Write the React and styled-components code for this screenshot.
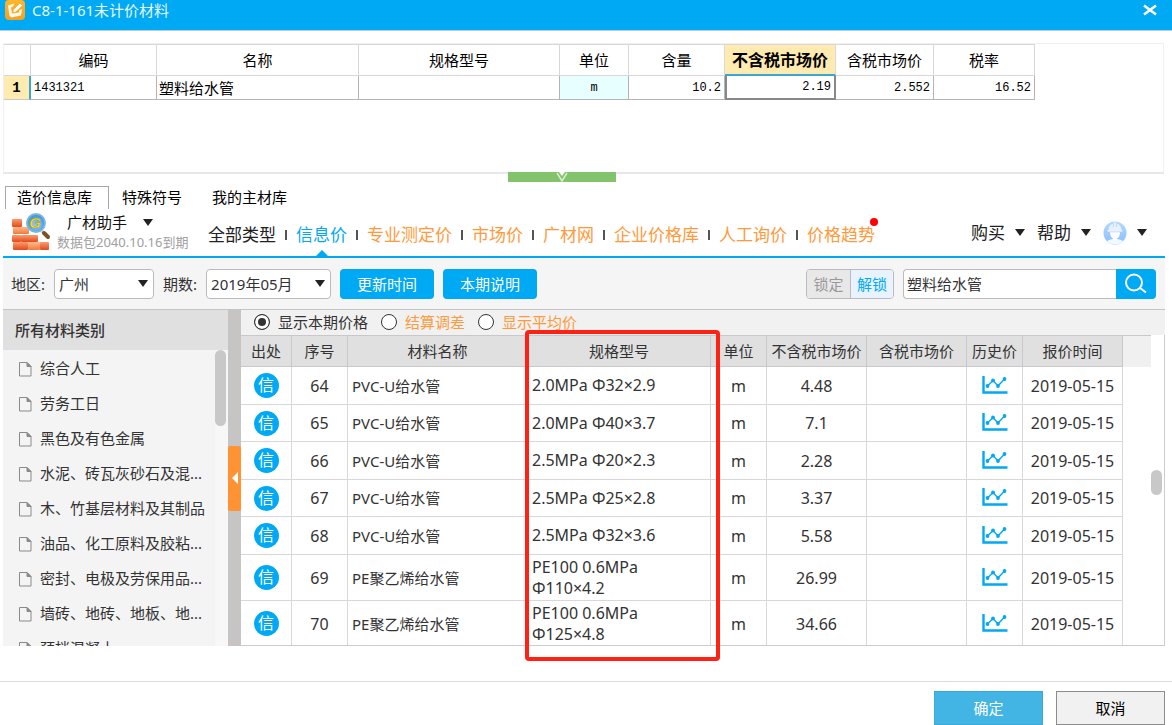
import React, { useState } from 'react'
import styled, { createGlobalStyle, css } from 'styled-components'

const BLUE = '#00a9f3'
const ORANGE = '#ff9a3c'

const navItems = ['全部类型', '信息价', '专业测定价', '市场价', '广材网', '企业价格库', '人工询价', '价格趋势']

const categories = [
  '综合人工',
  '劳务工日',
  '黑色及有色金属',
  '水泥、砖瓦灰砂石及混...',
  '木、竹基层材料及其制品',
  '油品、化工原料及胶粘...',
  '密封、电极及劳保用品...',
  '墙砖、地砖、地板、地...',
  '预拌混凝土'
]

const materials = [
  { id: 64, name: 'PVC-U给水管', spec: ['2.0MPa Φ32×2.9'], price: '4.48' },
  { id: 65, name: 'PVC-U给水管', spec: ['2.0MPa Φ40×3.7'], price: '7.1' },
  { id: 66, name: 'PVC-U给水管', spec: ['2.5MPa Φ20×2.3'], price: '2.28' },
  { id: 67, name: 'PVC-U给水管', spec: ['2.5MPa Φ25×2.8'], price: '3.37' },
  { id: 68, name: 'PVC-U给水管', spec: ['2.5MPa Φ32×3.6'], price: '5.58' },
  { id: 69, name: 'PE聚乙烯给水管', spec: ['PE100 0.6MPa', 'Φ110×4.2'], price: '26.99' },
  { id: 70, name: 'PE聚乙烯给水管', spec: ['PE100 0.6MPa', 'Φ125×4.8'], price: '34.66' }
]

const priceModes = ['显示本期价格', '结算调差', '显示平均价']

const AppIcon = () => (
  <svg width='20' height='20' viewBox='0 0 20 20' aria-hidden='true'>
    <defs>
      <linearGradient id='appIcon' x1='0' y1='0' x2='0' y2='1'>
        <stop offset='0' stopColor='#ffb52e' />
        <stop offset='1' stopColor='#f7a01c' />
      </linearGradient>
    </defs>
    <rect width='20' height='20' rx='4' fill='url(#appIcon)' />
    <path d='M3 5.500L9.500 3.500L8 6.500L6 7.500L7 13.500L14 12.500L14.500 10L17 9L16 15.500L6.500 17.500L4.500 16z' fill='#fff' opacity='.92' />
    <path d='M8.500 9.500l6.500-6.500 2.500 2.500-6.500 6.500-3.300.8z' fill='#fff' stroke='#f9a825' strokeWidth='.8' />
  </svg>
)

const BrandLogo = () => (
  <svg width='40' height='40' viewBox='0 0 40 40' aria-hidden='true'>
    <defs>
      <linearGradient id='brick' x1='0' y1='0' x2='0' y2='1'>
        <stop offset='0' stopColor='#ff9a6b' />
        <stop offset='1' stopColor='#e04a1c' />
      </linearGradient>
      <linearGradient id='brickLight' x1='0' y1='0' x2='0' y2='1'>
        <stop offset='0' stopColor='#ffb98a' />
        <stop offset='1' stopColor='#f07a3c' />
      </linearGradient>
      <radialGradient id='lens' cx='.5' cy='.6' r='.6'>
        <stop offset='0' stopColor='#8fd8ff' />
        <stop offset='1' stopColor='#2b8fd8' />
      </radialGradient>
    </defs>
    <rect x='2' y='8' width='36' height='30' fill='#f6d9cb' opacity='0' />
    <g fill='url(#brick)'>
      <rect x='1' y='7' width='10' height='8' rx='1' />
      <rect x='1' y='23' width='9' height='7' rx='1' />
      <rect x='10' y='23' width='17' height='7' rx='1' />
      <rect x='2' y='30' width='15' height='8' rx='1' />
      <rect x='29' y='30' width='9' height='8' rx='1' />
    </g>
    <g fill='url(#brickLight)'>
      <rect x='2' y='15' width='16' height='7' rx='1' />
      <rect x='17' y='30' width='12' height='8' rx='1' />
    </g>
    <path d='M31 19l2 2' stroke='#c9c9c9' strokeWidth='3' />
    <path d='M33 21l4 4' stroke='#7a5326' strokeWidth='4' strokeLinecap='round' />
    <circle cx='25' cy='11' r='9' fill='url(#lens)' stroke='#7fb4dc' strokeWidth='2' />
    <text x='24' y='16' textAnchor='middle' fill='#ffdc32' stroke='#a8862a' strokeWidth='.5' fontSize='15' fontWeight='700' fontStyle='italic' fontFamily='Liberation Sans, sans-serif'>G</text>
  </svg>
)

const Caret = () => (
  <svg width='10' height='7' viewBox='0 0 10 7' aria-hidden='true'>
    <path d='M0 0h10L5 7z' fill='#222' />
  </svg>
)

const Avatar = () => (
  <svg width='24' height='24' viewBox='0 0 24 24' aria-hidden='true'>
    <defs>
      <linearGradient id='avatarFill' x1='0' y1='0' x2='0' y2='1'>
        <stop offset='0' stopColor='#b5d8ff' />
        <stop offset='1' stopColor='#8abfff' />
      </linearGradient>
      <clipPath id='avatarClip'><circle cx='12' cy='12' r='11.500' /></clipPath>
    </defs>
    <circle cx='12' cy='12' r='11.500' fill='url(#avatarFill)' />
    <g clipPath='url(#avatarClip)'>
      <path d='M5.500 9c0-3.500 2-5.500 4.500-6.500v3.500h.8V1.500h2.400V6h.8V2.500c2.500 1 4.500 3 4.500 6.500z' fill='#e6f2ff' />
      <path d='M4.500 9.200h15v1.300h-15z' fill='#fff' />
      <path d='M7 11.200h10c0 3.500-1.500 5.500-3 6.300v1.500h-4v-1.500c-1.500-.8-3-2.800-3-6.300z' fill='#fff' />
      <path d='M2 24c1-4.500 4.500-5.500 8-6l2 1 2-1c3.500.5 7 1.500 8 6z' fill='#f2f8ff' />
    </g>
  </svg>
)

const DocIcon = () => (
  <svg width='13' height='20' viewBox='0 0 13 20' aria-hidden='true'>
    <path d='M.5 4.500h7.500l4 4V18H.5z' fill='none' stroke='#8a8a8a' />
    <path d='M8 4.500v4h4z' fill='#8a8a8a' stroke='#8a8a8a' />
  </svg>
)

const TrendIcon = () => (
  <svg width='26' height='20' viewBox='0 0 26 20' aria-hidden='true'>
    <path d='M1.500 0v16.500H25.500' fill='none' stroke={BLUE} strokeWidth='2.400' />
    <path d='M5.500 10l5.500-5.500 5 5.500 6.500-7' fill='none' stroke={BLUE} strokeWidth='1.400' />
    <g fill={BLUE}>
      <circle cx='5.500' cy='10' r='1.900' />
      <circle cx='11' cy='4.500' r='1.900' />
      <circle cx='16' cy='10' r='1.900' />
      <circle cx='22.500' cy='3' r='1.900' />
    </g>
  </svg>
)

const SearchIcon = () => (
  <svg width='24' height='22' viewBox='0 0 24 22' fill='none' stroke='#fff' strokeWidth='2' aria-hidden='true'>
    <circle cx='10' cy='9.500' r='8' />
    <path d='M16 15l6 4.500' />
  </svg>
)

export default function App() {
  const [nav, setNav] = useState('信息价')
  const [mode, setMode] = useState(priceModes[0])
  const [keyword, setKeyword] = useState('塑料给水管')

  return (
    <Dialog>
      <GlobalStyle />

      <TitleBar>
        <AppIcon />
        <Title>C8-1-161未计价材料</Title>
        <CloseButton aria-label='关闭'>
          <svg width='14' height='12' viewBox='0 0 14 12' aria-hidden='true'>
            <path d='M1 1.500l12 9M13 1.500l-12 9' stroke='#fff' strokeWidth='2.600' />
          </svg>
        </CloseButton>
      </TitleBar>

      <GridBox>
        <Grid>
          <colgroup>
            {[27, 126, 202, 201, 69, 96, 111, 98, 101].map((w, i) => <Col key={i} $w={w} />)}
          </colgroup>
          <thead>
            <tr>
              <GridHead />
              <GridHead>编码</GridHead>
              <GridHead>名称</GridHead>
              <GridHead>规格型号</GridHead>
              <GridHead>单位</GridHead>
              <GridHead>含量</GridHead>
              <GridHead $active>不含税市场价</GridHead>
              <GridHead>含税市场价</GridHead>
              <GridHead>税率</GridHead>
            </tr>
          </thead>
          <tbody>
            <tr>
              <RowNumber>1</RowNumber>
              <GridCell $mono>1431321</GridCell>
              <GridCell>塑料给水管</GridCell>
              <GridCell />
              <GridCell $mono $align='center' $tint>m</GridCell>
              <GridCell $mono $align='right'>10.2</GridCell>
              <GridCell $mono $align='right' $focus>2.19</GridCell>
              <GridCell $mono $align='right'>2.552</GridCell>
              <GridCell $mono $align='right'>16.52</GridCell>
            </tr>
          </tbody>
        </Grid>
        <CollapseHandle aria-label='收起'>
          <svg width='12' height='10' viewBox='0 0 12 10' aria-hidden='true'>
            <path d='M3 0h6L6 4z' fill='#fff' />
            <path d='M1 1l5 8 5-8' fill='none' stroke='#d8efcf' strokeWidth='1.500' />
          </svg>
        </CollapseHandle>
      </GridBox>

      <Tabs>
        <Tab $active>造价信息库</Tab>
        <Tab>特殊符号</Tab>
        <Tab>我的主材库</Tab>
      </Tabs>

      <Header>
        <Brand>
          <BrandLogo />
          <BrandText>
            <BrandName>广材助手 <Caret /></BrandName>
            <Expiry>数据包2040.10.16到期</Expiry>
          </BrandText>
        </Brand>
        <Nav>
          {navItems.map((item, i) => (
            <NavItem key={item}>
              <NavLink href='#' $plain={i === 0} $active={item === nav} onClick={() => setNav(item)}>
                {item}
                {item === '价格趋势' && <RedDot />}
              </NavLink>
            </NavItem>
          ))}
        </Nav>
        <Account>
          <MenuButton>购买 <Caret /></MenuButton>
          <MenuButton>帮助 <Caret /></MenuButton>
          <MenuButton aria-label='账户'><Avatar /> <Caret /></MenuButton>
        </Account>
      </Header>

      <Filters>
        <FilterLabel htmlFor='region'>地区:</FilterLabel>
        <SelectBox $w={100}>
          <Select id='region' defaultValue='广州'><option>广州</option></Select>
          <Caret />
        </SelectBox>
        <FilterLabel htmlFor='period'>期数:</FilterLabel>
        <SelectBox $w={125}>
          <Select id='period' defaultValue='2019年05月'><option>2019年05月</option></Select>
          <Caret />
        </SelectBox>
        <BlueButton>更新时间</BlueButton>
        <BlueButton>本期说明</BlueButton>
        <Toggle>
          <ToggleButton>锁定</ToggleButton>
          <ToggleButton $on>解锁</ToggleButton>
        </Toggle>
        <SearchBox>
          <SearchInput aria-label='搜索' value={keyword} onChange={e => setKeyword(e.target.value)} />
          <SearchButton aria-label='查询'><SearchIcon /></SearchButton>
        </SearchBox>
      </Filters>

      <Content>
        <Sidebar>
          <SidebarTitle>所有材料类别</SidebarTitle>
          <SidebarBody>
            <CategoryList>
              {categories.map(c => (
                <li key={c}><Category href='#'><DocIcon />{c}</Category></li>
              ))}
            </CategoryList>
            <Gutter><Thumb $h={76} /></Gutter>
          </SidebarBody>
        </Sidebar>

        <Splitter>
          <SplitterButton aria-label='折叠'>
            <svg width='6' height='12' viewBox='0 0 6 12' aria-hidden='true'>
              <path d='M6 0v12L0 6z' fill='#fff' />
            </svg>
          </SplitterButton>
        </Splitter>

        <Main>
          <MainClip>
            <ModeRow>
              {priceModes.map((m, i) => (
                <ModeLabel key={m} $plain={i === 0}>
                  <Radio name='mode' checked={m === mode} onChange={() => setMode(m)} />
                  {m}
                </ModeLabel>
              ))}
            </ModeRow>
            <TableArea>
              <Table>
                <colgroup>
                  {[51, 56, 180, 183, 56, 100, 100, 56, 100].map((w, i) => <Col key={i} $w={w} />)}
                  <col />
                </colgroup>
                <thead>
                  <tr>
                    <Th>出处</Th>
                    <Th>序号</Th>
                    <Th>材料名称</Th>
                    <Th>规格型号</Th>
                    <Th>单位</Th>
                    <Th>不含税市场价</Th>
                    <Th>含税市场价</Th>
                    <Th>历史价</Th>
                    <Th>报价时间</Th>
                    <ThFill />
                  </tr>
                </thead>
                <tbody>
                  {materials.map(row => (
                    <Row key={row.id} $tall={row.spec.length > 1}>
                      <Td><Badge>信</Badge></Td>
                      <Td $num>{row.id}</Td>
                      <Td $left>{row.name}</Td>
                      <Td $left $num>{row.spec.map(s => <SpecLine key={s}>{s}</SpecLine>)}</Td>
                      <Td $num>m</Td>
                      <Td $num>{row.price}</Td>
                      <Td />
                      <Td><TrendIcon /></Td>
                      <Td $num>2019-05-15</Td>
                      <td />
                    </Row>
                  ))}
                </tbody>
              </Table>
              <Gutter $plain><Thumb $h={25} $top={135} /></Gutter>
            </TableArea>
          </MainClip>
          <Highlight />
        </Main>
      </Content>

      <Footer>
        <FooterButton $primary>确定</FooterButton>
        <FooterButton>取消</FooterButton>
      </Footer>
    </Dialog>
  )
}

const GlobalStyle = createGlobalStyle`
  * { box-sizing: border-box; }
  body {
    margin: 0;
    background: #fff;
    color: #333;
    font: 15px/20px 'Noto Sans', 'Noto Sans CJK SC', sans-serif;
  }
  button, input, select { font: inherit; color: inherit; }
  button { border: 0; padding: 0; background: none; cursor: pointer; }
  a { color: inherit; text-decoration: none; }
  svg { display: block; flex: none; }
`

const Dialog = styled.div`
  display: flex;
  flex-direction: column;
  height: 100vh;
  overflow: hidden;
`

const TitleBar = styled.header`
  display: flex;
  align-items: flex-start;
  gap: 7px;
  height: 31px;
  padding: 0 15px 0 5px;
  background: ${BLUE};
  border-bottom: 1px solid #b9cdd6;
`

const Title = styled.h1`
  flex: 1;
  margin: 0;
  color: #e6f7ff;
  font-size: 15px;
  font-weight: 400;
`

const CloseButton = styled.button`
  padding-top: 4px;
`

const GridBox = styled.section`
  position: relative;
  flex: none;
  height: 131px;
  margin: 12px 8px 0 3px;
  border: 1px solid #f0f0f0;
  border-bottom: 2px solid #e8e8e8;
`

const Col = styled.col`
  width: ${p => p.$w}px;
`

const Grid = styled.table`
  table-layout: fixed;
  width: 1031px;
  border-spacing: 0;
  color: #000;
`

const GridHead = styled.th`
  height: 32px;
  padding: 0;
  border-top: 1px solid #d8d8d8;
  border-right: 1px solid #d8d8d8;
  border-bottom: 1px solid #d8d8d8;
  font-weight: 400;
  white-space: nowrap;

  ${p => p.$active && css`
    background: #ffeab0;
    border-bottom: 2px solid #3aa6d4;
    font-size: 16px;
    font-weight: 700;
  `}
`

const RowNumber = styled.th`
  height: 24px;
  padding: 0;
  background: #ffeab0;
  border-right: 2px solid #3aa6d4;
  border-bottom: 1px solid #c8c8c8;
  font: 700 14px/20px 'Liberation Mono', monospace;
`

const GridCell = styled.td`
  height: 24px;
  padding: 0 3px;
  border-right: 1px solid #b4b4b4;
  border-bottom: 1px solid #b4b4b4;
  text-align: ${p => p.$align || 'left'};
  background: ${p => p.$tint ? '#e8ffff' : 'transparent'};

  &:nth-child(3) { padding-left: 2px; }

  ${p => p.$mono && css`
    font-family: 'Liberation Mono', monospace;
    font-size: 12px;
  `}
  ${p => p.$focus && css`
    border: 2px solid #888;
    border-top: 0;
  `}
`

const CollapseHandle = styled.button`
  position: absolute;
  left: 43.5%;
  bottom: -10px;
  display: flex;
  justify-content: center;
  width: 108px;
  height: 10px;
  background: #82c36c;
`

const Tabs = styled.div`
  display: flex;
  flex: none;
  margin: 12px 5px 0;
`

const Tab = styled.button`
  height: 23px;
  padding: 0 16px 2px 12px;
  border: 1px solid transparent;
  border-bottom: 0;
  color: #000;

  ${p => p.$active && css`
    padding: 0 16px 2px 11px;
    border-color: #a8a8a8;
  `}
`

const Header = styled.div`
  display: flex;
  flex: none;
  height: 49px;
  margin: 0 7px 0 3px;
  border-bottom: 2px solid ${BLUE};
`

const Brand = styled.div`
  display: flex;
  flex: none;
  width: 205px;
  padding: 3px 0 0 8px;
  gap: 6px;
`

const BrandText = styled.div`
  white-space: nowrap;
`

const BrandName = styled.button`
  display: flex;
  align-items: center;
  gap: 16px;
  padding-left: 10px;
  color: #111;
`

const Expiry = styled.div`
  color: #a0a0a0;
  font-size: 13px;
`

const Nav = styled.ul`
  display: flex;
  flex: 1;
  margin: 0;
  padding: 0;
  list-style: none;
`

const NavItem = styled.li`
  display: flex;
  align-items: center;
  height: 47px;
  padding-top: 4px;
  white-space: nowrap;

  & + &::before {
    content: '';
    width: 2px;
    height: 10px;
    margin: 0 9px;
    background: #555;
  }
`

const NavLink = styled.a`
  position: relative;
  color: ${p => p.$active ? BLUE : p.$plain ? '#222' : ORANGE};
  font-size: 17px;

  ${p => p.$active && css`
    &::after {
      content: '';
      position: absolute;
      left: 50%;
      bottom: -12px;
      margin-left: -7px;
      border: 7px solid transparent;
      border-top: 0;
      border-bottom-color: ${BLUE};
    }
  `}
`

const RedDot = styled.span`
  position: absolute;
  top: -7px;
  right: -3px;
  width: 8px;
  height: 8px;
  border-radius: 50%;
  background: #f00;
`

const Account = styled.div`
  display: flex;
  align-items: center;
  gap: 12px;
  padding-right: 18px;
`

const MenuButton = styled.button`
  display: flex;
  align-items: center;
  gap: 10px;
  color: #222;
  font-size: 17px;
`

const Filters = styled.div`
  display: flex;
  align-items: center;
  flex: none;
  gap: 9px;
  height: 52px;
  margin: 0 7px 0 3px;
  padding: 0 9px 0 8px;
  background: #f5f5f5;
  border-bottom: 1px solid #c4c4c4;
`

const FilterLabel = styled.label`
  white-space: nowrap;
`

const SelectBox = styled.div`
  position: relative;
  width: ${p => p.$w}px;

  svg {
    position: absolute;
    top: 11px;
    right: 6px;
    pointer-events: none;
  }
`

const Select = styled.select`
  appearance: none;
  width: 100%;
  height: 30px;
  padding: 0 4px;
  border: 1px solid #bbb;
  border-radius: 4px;
  background: #fff;
`

const BlueButton = styled.button`
  width: 94px;
  height: 30px;
  border-radius: 4px;
  background: ${BLUE};
  color: #fff;
`

const Toggle = styled.div`
  display: flex;
  height: 30px;
  margin-left: auto;
  border: 1px solid #bbb;
  border-radius: 4px;
  overflow: hidden;
`

const ToggleButton = styled.button`
  width: 43px;
  background: ${p => p.$on ? '#e8f3ff' : '#e8e8e8'};
  color: ${p => p.$on ? BLUE : '#999'};

  & + & {
    border-left: 1px solid #bbb;
  }
`

const SearchBox = styled.div`
  display: flex;
  height: 30px;
`

const SearchInput = styled.input`
  width: 213px;
  padding: 0 3px;
  border: 1px solid #bbb;
  border-right: 0;
  border-radius: 4px 0 0 4px;
  background: #fff;
`

const SearchButton = styled.button`
  display: flex;
  align-items: center;
  justify-content: center;
  width: 40px;
  border-radius: 0 4px 4px 0;
  background: ${BLUE};
`

const Content = styled.div`
  display: flex;
  flex: 1;
  min-height: 0;
  margin: 0 7px 35px 3px;
`

const Sidebar = styled.aside`
  display: flex;
  flex-direction: column;
  flex: none;
  width: 225px;
  background: #f4f4f4;
`

const SidebarTitle = styled.h2`
  flex: none;
  height: 40px;
  margin: 0;
  padding: 0 12px;
  background: #e0e0e0;
  font-size: 15px;
  font-weight: 500;
  line-height: 40px;
`

const SidebarBody = styled.div`
  display: flex;
  flex: 1;
  min-height: 0;
  overflow: hidden;
`

const CategoryList = styled.ul`
  flex: 1;
  margin: 0;
  padding: 0;
  list-style: none;
`

const Category = styled.a`
  display: flex;
  align-items: center;
  gap: 8px;
  height: 35px;
  padding-left: 16px;
  white-space: nowrap;
`

const Gutter = styled.div`
  flex: none;
  width: 13px;
  padding-right: 2px;
  background: ${p => p.$plain ? '#fff' : '#f7f7f7'};
`

const Thumb = styled.div`
  height: ${p => p.$h}px;
  margin-top: ${p => p.$top || 0}px;
  border-radius: 6px;
  background: #c8c8c8;
`

const Splitter = styled.div`
  display: flex;
  align-items: center;
  flex: none;
  width: 13px;
  background: #c6c5c4;
`

const SplitterButton = styled.button`
  display: flex;
  align-items: center;
  justify-content: center;
  width: 13px;
  height: 65px;
  border-radius: 2px;
  background: #ff9233;
`

const Main = styled.main`
  position: relative;
  flex: 1;
  min-width: 0;
`

const MainClip = styled.div`
  display: flex;
  flex-direction: column;
  height: 100%;
  overflow: hidden;
  border-bottom: 1px solid #ccc;
`

const ModeRow = styled.div`
  display: flex;
  align-items: center;
  flex: none;
  gap: 13px;
  height: 25px;
  padding: 0 13px 2px;
  background: #f1f1f1;
`

const ModeLabel = styled.label`
  display: flex;
  align-items: center;
  gap: 8px;
  color: ${p => p.$plain ? '#333' : ORANGE};
`

const Radio = styled.input.attrs({ type: 'radio' })`
  appearance: none;
  width: 16px;
  height: 16px;
  margin: 0;
  border: 1px solid #333;
  border-radius: 50%;
  background: #fff;

  &:checked {
    background: #333;
    box-shadow: inset 0 0 0 3px #fff;
  }
`

const TableArea = styled.div`
  display: flex;
  align-items: flex-start;
  flex: 1;
  min-height: 0;
  border-right: 1px solid #ccc;
`

const Table = styled.table`
  flex: 1;
  table-layout: fixed;
  width: 100%;
  border-spacing: 0;
`

const Th = styled.th`
  height: 32px;
  padding: 0;
  background: #e0e0e0;
  border: solid #c8c8c8;
  border-width: 1px 1px 1px 0;
  font-weight: 400;
  white-space: nowrap;
`

const ThFill = styled.td`
  background: #f0f0f0;
  border-top: 1px solid #c8c8c8;
`

const Row = styled.tr`
  height: ${p => p.$tall ? 46 : 37}px;

  &:nth-child(odd) {
    height: ${p => p.$tall ? 46 : 38}px;
  }
`

const Td = styled.td`
  padding: 0 4px;
  border-right: 1px solid #d8d8d8;
  border-bottom: 1px solid #d8d8d8;
  text-align: ${p => p.$left ? 'left' : 'center'};
  font-size: ${p => p.$num ? 16 : 15}px;
  white-space: nowrap;

  svg { margin: 0 auto; }
`

const SpecLine = styled.div`
  line-height: 21px;
`

const Badge = styled.span`
  display: block;
  width: 25px;
  height: 25px;
  margin: 0 auto;
  border-radius: 50%;
  background: ${BLUE};
  color: #fff;
  font-size: 16px;
  line-height: 24px;
`

const Highlight = styled.div`
  position: absolute;
  top: 20px;
  left: 284px;
  bottom: -15px;
  width: 195px;
  border: 4px solid #ff2214;
  border-radius: 4px;
  pointer-events: none;
`

const Footer = styled.footer`
  display: flex;
  justify-content: flex-end;
  flex: none;
  gap: 13px;
  height: 44px;
  padding: 9px 7px 0;
  border-top: 1px solid #ddd;
`

const FooterButton = styled.button`
  width: 109px;
  height: 34px;
  background: ${p => p.$primary ? '#43b5e4' : '#f1f1f1'};
  border: 1px solid ${p => p.$primary ? '#3aa9d8' : '#8c8c8c'};
  color: ${p => p.$primary ? '#fff' : '#000'};
`
